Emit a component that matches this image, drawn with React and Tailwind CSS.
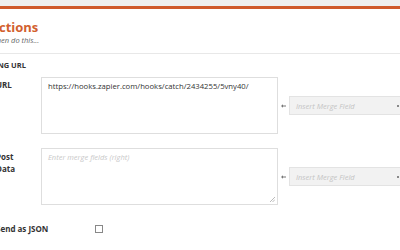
import React from 'react';

const LeftArrow = () => (
  <svg width="5" height="4" viewBox="0 0 5 4" className="block">
    <path d="M0 2 L2 0.3 L2 1.5 L5 1.5 L5 2.5 L2 2.5 L2 3.7 Z" fill="#777" />
  </svg>
);

const MergeSelect = () => (
  <div className="flex items-center h-[19px] w-[120px] shrink-0 bg-[#f2f2f2] border border-[#e3e3e3] pl-[6px] pr-[9px]">
    <span className="flex-1 text-[7.5px] italic text-[#c4c4c4] leading-[10px]">Insert Merge Field</span>
    <span className="w-[2px] h-[2px] rounded-full bg-[#666]" />
  </div>
);

const Grip = () => (
  <svg width="5" height="5" viewBox="0 0 5 5" className="absolute right-[2px] bottom-[2px]">
    <path d="M5 0 L0 5 M5 2.5 L2.5 5" stroke="#aaa" strokeWidth="0.8" />
  </svg>
);

const App = () => {
  return (
    <div className="w-[400px] h-[250px] overflow-hidden bg-white text-[#333] font-['Open_Sans',sans-serif]">
      <div className="h-[6px] bg-[#efefef]" />
      <div className="h-[3px] bg-[#cf5a2c]" />

      {/* Header */}
      <div className="-ml-[10px] pt-[9px] pb-[9px]">
        <h1 className="text-[13px] leading-[18px] font-bold text-[#d2602e]">Actions</h1>
        <p className="ml-[3px] text-[7.5px] leading-[8px] italic text-[#666]">Then do this...</p>
      </div>
      <div className="border-t border-[#e8e8e8]" />

      {/* Form */}
      <div className="-ml-[4px]">
        <h2 className="-ml-[20px] pt-[6px] mb-[7px] text-[7.5px] leading-[10px] font-bold uppercase">
          Posting URL
        </h2>

        <div className="flex items-center">
          <div className="w-[45px] shrink-0 self-start pt-[2px] text-[8px] leading-[12px] font-bold">URL</div>
          <div className="w-[237px] h-[57px] shrink-0 border border-[#dedede] pt-[3px] px-[6px] text-[7.7px] leading-[10px] text-[#333]">
            https://hooks.zapier.com/hooks/catch/2434255/5vny40/
          </div>
          <div className="w-[11px] shrink-0 flex justify-center">
            <LeftArrow />
          </div>
          <MergeSelect />
        </div>

        <div className="flex items-center mt-[14px]">
          <div className="w-[45px] shrink-0 self-start pt-[3px] text-[8px] leading-[12px] font-bold">
            Post
            <br />
            Data
          </div>
          <div className="relative w-[237px] h-[57px] shrink-0 border border-[#dedede] pt-[3px] px-[6px] text-[7.5px] leading-[10px] italic text-[#c8c8c8]">
            Enter merge fields (right)
            <Grip />
          </div>
          <div className="w-[11px] shrink-0 flex justify-center">
            <LeftArrow />
          </div>
          <MergeSelect />
        </div>

        <div className="flex items-center mt-[18px] h-[12px]">
          <div className="w-[99px] shrink-0 text-[8px] leading-[12px] font-bold">Send as JSON</div>
          <div className="w-[8px] h-[8px] border border-[#888] bg-white" />
        </div>
      </div>
    </div>
  );
};

export default App;
